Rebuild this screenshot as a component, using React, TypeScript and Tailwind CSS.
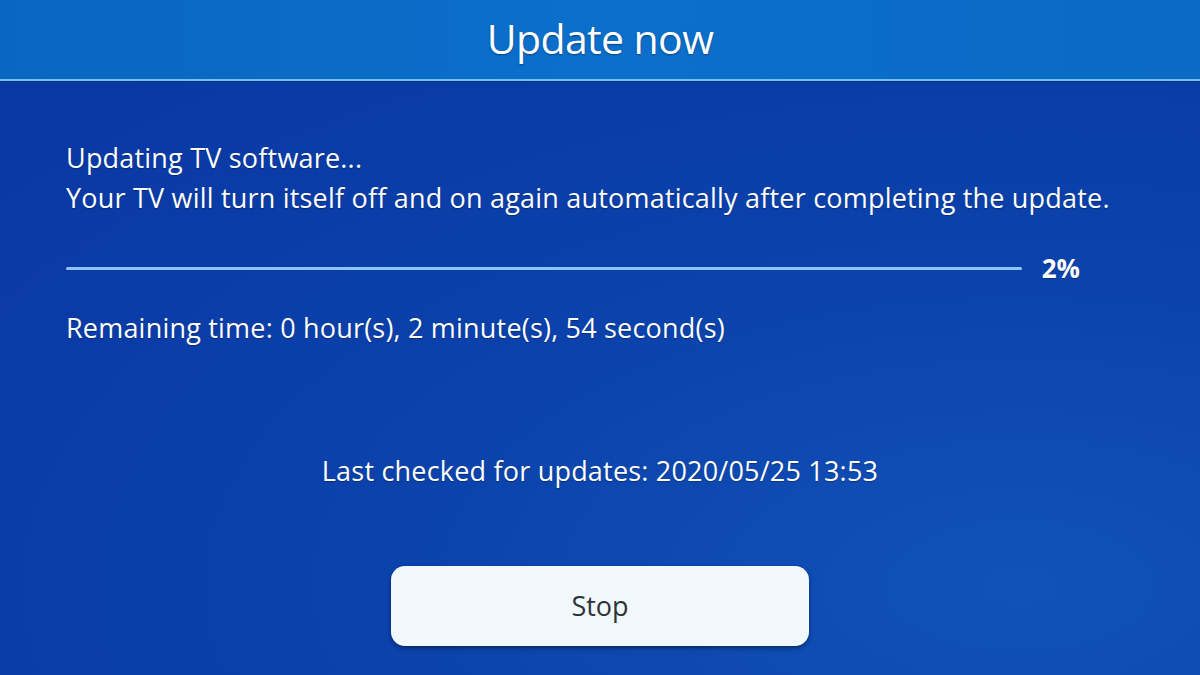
export default function App() {
  const progress = 2;
  const bodyText =
    "text-[27px] leading-[40px] font-medium tracking-[0.2px] [text-shadow:0_1px_1px_rgba(0,0,0,0.3)]";
  return (
    <div
      className="w-[1200px] h-[675px] overflow-hidden flex flex-col text-white"
      style={{ fontFamily: '"Open Sans", "Noto Sans", sans-serif' }}
    >
      {/* title bar */}
      <header className="h-[79px] shrink-0 bg-[linear-gradient(90deg,#0a66c2,#0b6fcb_50%,#0a6ac6)] flex items-center justify-center">
        <h1 className="text-[41px] leading-none tracking-[-0.6px] pb-[2px] [text-shadow:0_1px_2px_rgba(0,0,0,0.35)]">
          Update now
        </h1>
      </header>
      <div className="h-[3px] shrink-0 bg-[#6cc4f4] border-b border-[#0b2f86]" />

      {/* body */}
      <main className="flex-1 flex flex-col bg-[radial-gradient(ellipse_at_85%_85%,#1152b8_0%,#0b42ab_45%,#0937a4_100%)]">
        <section className={`px-[66px] pt-[56px] ${bodyText}`}>
          <p>Updating TV software...</p>
          <p>Your TV will turn itself off and on again automatically after completing the update.</p>
        </section>

        {/* progress */}
        <div className="flex items-center pl-[66px] pr-[120px] mt-[36px] gap-[20px]">
          <div className="flex-1 h-[3px] bg-[#8ec4f2] rounded-full" />
          <span className="text-[26px] font-bold leading-[28px] [text-shadow:0_1px_1px_rgba(0,0,0,0.3)]">{progress}%</span>
        </div>

        <p className={`px-[66px] mt-[26px] ${bodyText}`}>
          Remaining time: 0 hour(s), 2 minute(s), 54 second(s)
        </p>

        <p className={`mt-[103px] text-center ${bodyText}`}>
          Last checked for updates: 2020/05/25 13:53
        </p>

        <div className="flex justify-center mt-[75px]">
          <button className="w-[418px] h-[80px] rounded-[14px] bg-[#f1f8fc] text-[#2e3238] text-[27px] font-medium shadow-[0_2px_4px_rgba(0,0,0,0.45)]">
            Stop
          </button>
        </div>
      </main>
    </div>
  );
}
